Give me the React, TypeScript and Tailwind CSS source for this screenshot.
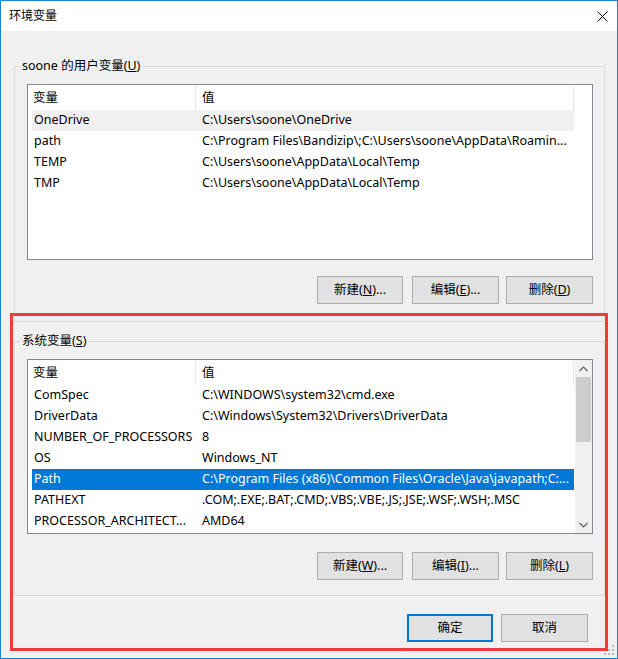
import React from "react";

type Row = { name: string; value: string; hover?: boolean; selected?: boolean };

const userRows: Row[] = [
  { name: "OneDrive", value: "C:\\Users\\soone\\OneDrive", hover: true },
  { name: "path", value: "C:\\Program Files\\Bandizip\\;C:\\Users\\soone\\AppData\\Roamin..." },
  { name: "TEMP", value: "C:\\Users\\soone\\AppData\\Local\\Temp" },
  { name: "TMP", value: "C:\\Users\\soone\\AppData\\Local\\Temp" },
];

const sysRows: Row[] = [
  { name: "ComSpec", value: "C:\\WINDOWS\\system32\\cmd.exe" },
  { name: "DriverData", value: "C:\\Windows\\System32\\Drivers\\DriverData" },
  { name: "NUMBER_OF_PROCESSORS", value: "8" },
  { name: "OS", value: "Windows_NT" },
  { name: "Path", value: "C:\\Program Files (x86)\\Common Files\\Oracle\\Java\\javapath;C:...", selected: true },
  { name: "PATHEXT", value: ".COM;.EXE;.BAT;.CMD;.VBS;.VBE;.JS;.JSE;.WSF;.WSH;.MSC" },
  { name: "PROCESSOR_ARCHITECT...", value: "AMD64" },
];

function Header() {
  return (
    <div className="flex h-[25px] pl-[4px] pt-[1px] bg-white">
      <div className="w-[164px] pl-[1px] flex items-center border-r border-[#e5e5e5]">变量</div>
      <div className="w-[378px] pl-[6px] flex items-center border-r border-[#e5e5e5]">值</div>
    </div>
  );
}

function ListRows({ rows }: { rows: Row[] }) {
  return (
    <div className="pl-[4px]">
      {rows.map((r) => (
        <div
          key={r.name}
          className={
            "flex h-[21px] w-[542px] items-center whitespace-nowrap " +
            (r.selected ? "bg-[#0078d7] text-white" : r.hover ? "bg-[#f0f0f0]" : "")
          }
        >
          <div className="w-[164px] pl-[2px] overflow-hidden">{r.name}</div>
          <div className="w-[378px] pl-[6px] overflow-hidden">{r.value}</div>
        </div>
      ))}
    </div>
  );
}

function Btn({ children, w, primary }: { children: React.ReactNode; w: string; primary?: boolean }) {
  return (
    <div
      className={
        "h-[28px] flex items-center justify-center bg-[#e1e1e1] " +
        w +
        (primary ? " border-2 border-[#0078d7]" : " border border-[#adadad]")
      }
    >
      {children}
    </div>
  );
}

function Chevron({ up }: { up?: boolean }) {
  return (
    <svg width="9" height="6" viewBox="0 0 9 6">
      <path
        d={up ? "M0.5 5 L4.5 1 L8.5 5" : "M0.5 1 L4.5 5 L8.5 1"}
        fill="none"
        stroke="#606060"
        strokeWidth="1.2"
      />
    </svg>
  );
}

export default function App() {
  return (
    <div className="relative w-[618px] h-[659px] border border-[#1883d7] bg-[#f0f0f0] overflow-hidden text-[12.5px] text-black font-['Noto_Sans','Noto_Sans_CJK_SC',sans-serif]">
      {/* Title bar */}
      <div className="h-[30px] bg-white flex items-center justify-between pl-[8px] pr-[9px]">
        <span className="text-[12px]">环境变量</span>
        <svg width="11" height="11" viewBox="0 0 11 11">
          <path d="M0.5 0.5 L10.5 10.5 M10.5 0.5 L0.5 10.5" stroke="#000" strokeWidth="1" />
        </svg>
      </div>

      <div className="pl-[13px] pr-[12px]">
        {/* User variables */}
        <fieldset className="mt-[26px] border border-[#dcdcdc]">
          <legend className="ml-[5px] px-[2px] leading-[18px]">
            soone 的用户变量(<u>U</u>)
          </legend>
          <div className="pt-[9px] pl-[12px] pr-[11px] pb-[17px]">
            <div className="h-[176px] border border-[#828790] bg-white">
              <Header />
              <ListRows rows={userRows} />
            </div>
            <div className="mt-[16px] flex justify-end">
              <Btn w="w-[86px]">新建(<u>N</u>)...</Btn>
              <div className="w-[9px]" />
              <Btn w="w-[87px]">编辑(<u>E</u>)...</Btn>
              <div className="w-[7px]" />
              <Btn w="w-[87px]">删除(<u>D</u>)</Btn>
            </div>
          </div>
        </fieldset>

        {/* System variables */}
        <fieldset className="mt-[10px] border border-[#dcdcdc]">
          <legend className="ml-[5px] px-[2px] leading-[18px]">
            系统变量(<u>S</u>)
          </legend>
          <div className="pt-[9px] pl-[12px] pr-[11px] pb-[15px]">
            <div className="h-[175px] border border-[#828790] bg-white flex">
              <div className="flex-1 overflow-hidden">
                <Header />
                <ListRows rows={sysRows} />
              </div>
              <div className="w-[17px] bg-[#f0f0f0] flex flex-col">
                <div className="h-[17px] flex items-center justify-center">
                  <Chevron up />
                </div>
                <div className="h-[65px] mx-[1px] bg-[#cdcdcd]" />
                <div className="flex-1" />
                <div className="h-[17px] flex items-center justify-center">
                  <Chevron />
                </div>
              </div>
            </div>
            <div className="mt-[18px] flex justify-end">
              <Btn w="w-[86px]">新建(<u>W</u>)...</Btn>
              <div className="w-[9px]" />
              <Btn w="w-[87px]">编辑(<u>I</u>)...</Btn>
              <div className="w-[7px]" />
              <Btn w="w-[87px]">删除(<u>L</u>)</Btn>
            </div>
          </div>
        </fieldset>

        <div className="mt-[18px] flex justify-end pr-[17px]">
          <Btn w="w-[86px]" primary>确定</Btn>
          <div className="w-[8px]" />
          <Btn w="w-[87px]">取消</Btn>
        </div>
      </div>

      {/* red annotation box */}
      <div className="absolute left-[9px] top-[312px] w-[598px] h-[338px] border-[3px] border-[#f33a3a] pointer-events-none" />

      {/* size grip */}
      <svg className="absolute right-[2px] bottom-[2px]" width="12" height="12" viewBox="0 0 12 12">
        <rect x="9" y="1" width="2" height="2" fill="#bcbcbc" />
        <rect x="5" y="5" width="2" height="2" fill="#bcbcbc" />
        <rect x="9" y="5" width="2" height="2" fill="#bcbcbc" />
        <rect x="1" y="9" width="2" height="2" fill="#bcbcbc" />
        <rect x="5" y="9" width="2" height="2" fill="#bcbcbc" />
        <rect x="9" y="9" width="2" height="2" fill="#bcbcbc" />
      </svg>
    </div>
  );
}
